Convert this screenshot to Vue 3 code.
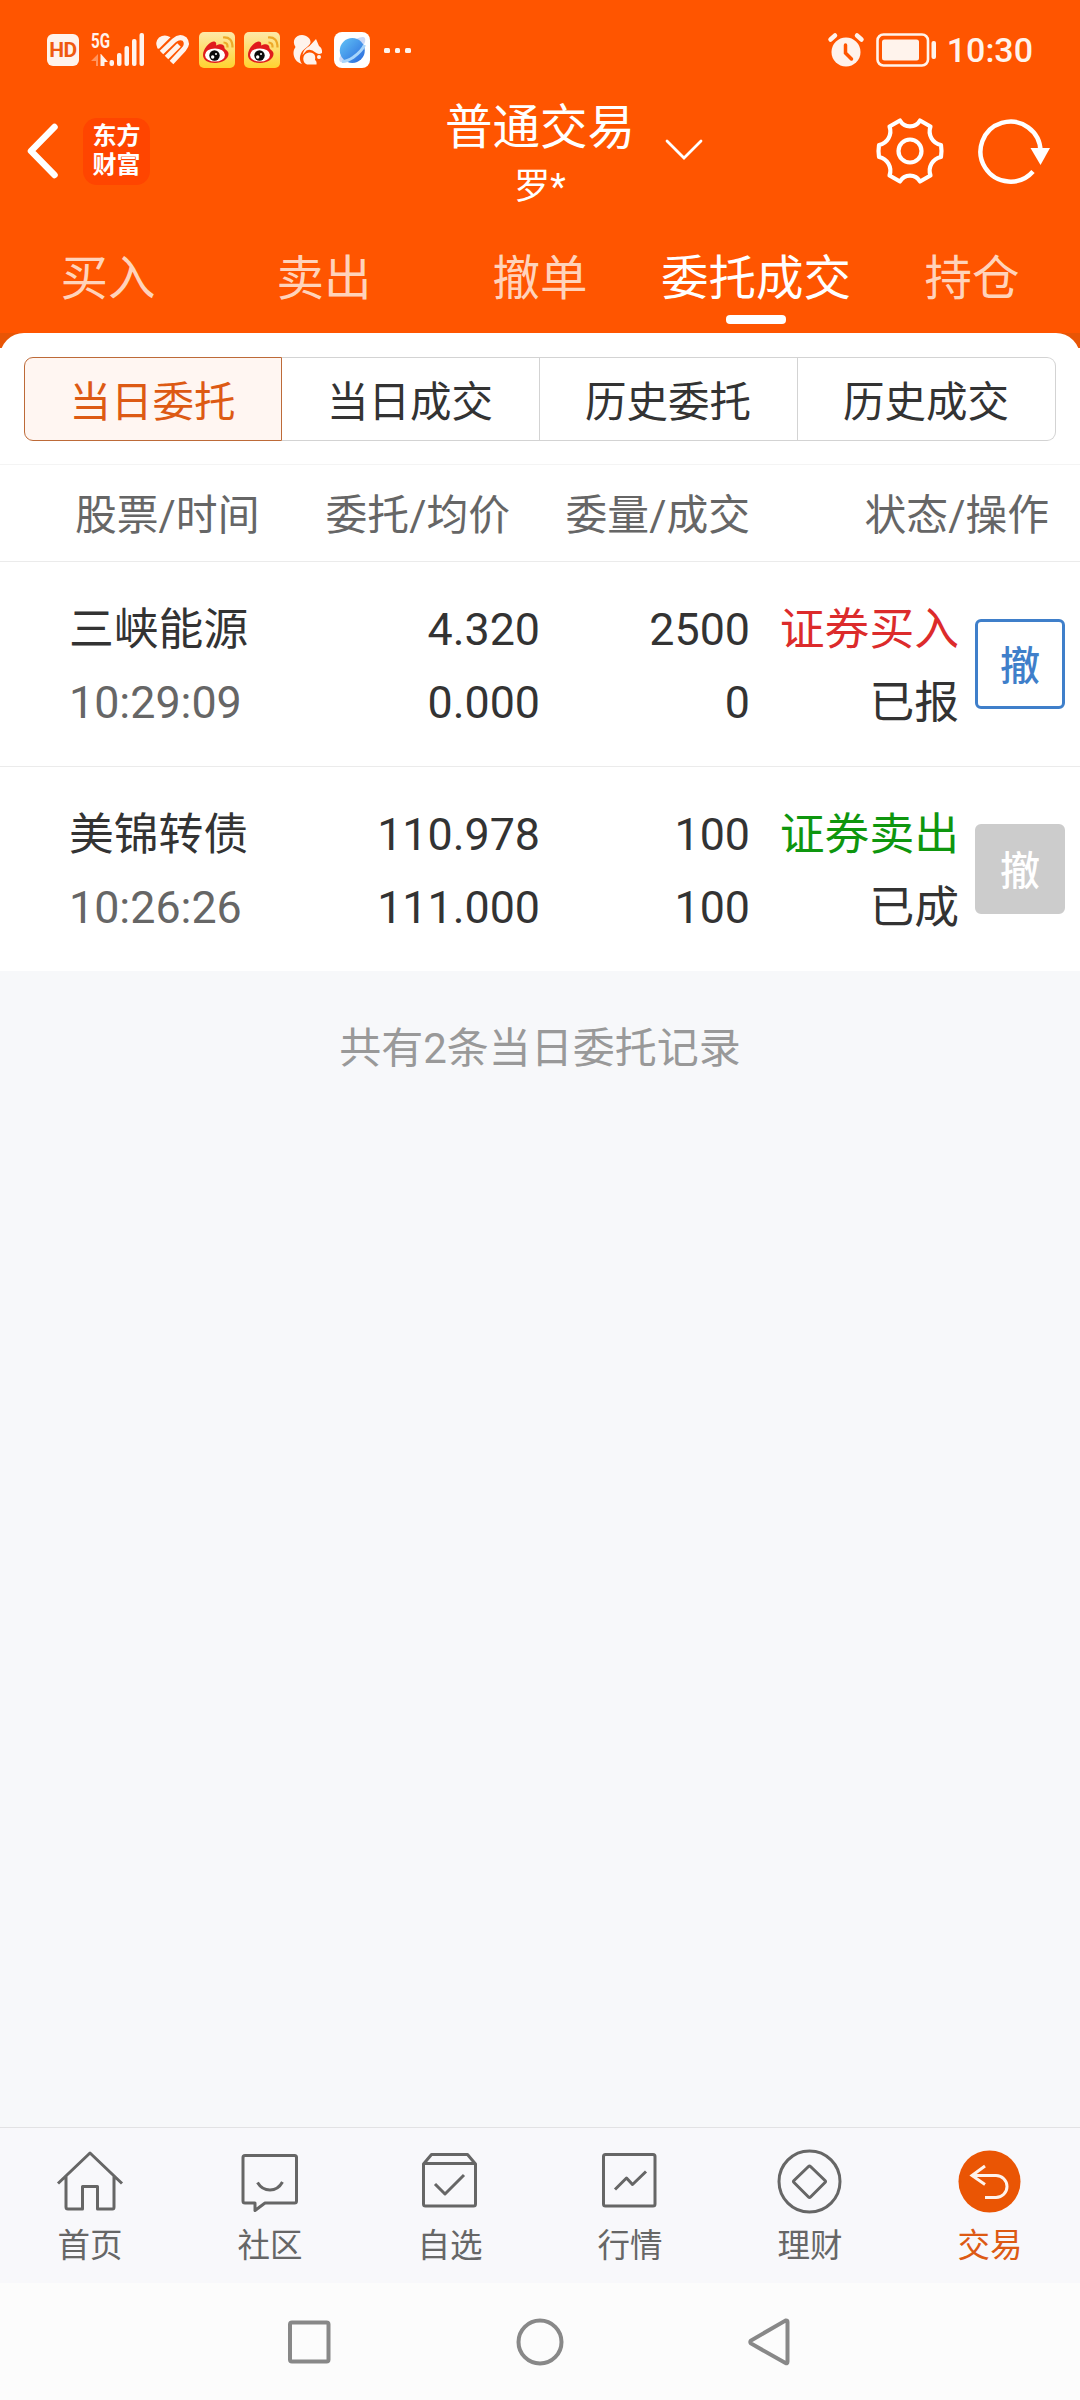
<template>
  <div class="page">
    <header class="top">
      <div class="status-bar">
        <div class="hd">HD</div>
        <svg class="signal" width="54" height="40" viewBox="0 -2 54 40">
          <text x="0" y="16" font-size="20" font-weight="700" textLength="19" lengthAdjust="spacingAndGlyphs">5G</text>
          <path d="M5 34V29H0L7 22V34Z" opacity="0.4" />
          <path d="M10 22L17 30H13.500V34H9.500V22Z" />
          <rect x="18.500" y="28" width="4.500" height="6" rx="2" />
          <rect x="26" y="21" width="4.500" height="13" rx="2" />
          <rect x="33.500" y="14" width="4.500" height="20" rx="2" />
          <rect x="41" y="7" width="4.500" height="27" rx="2" />
          <rect x="48.500" y="1" width="4.500" height="33" rx="2" />
        </svg>
        <svg class="health" width="34" height="32" viewBox="0 0 34 32">
          <path d="M1.500 14.500Q-1.500 8 3 3.500Q8.500 -.5 14.500 3.200L3 14.800Z" />
          <g fill="none" stroke="#fff3ec" stroke-width="5">
            <path d="M5.500 18.500L18 6.500Q23.500 1.500 28.500 5Q32.500 9.500 28 15L15.500 28.500" />
            <path d="M10.500 23.500L23 11" />
          </g>
        </svg>
        <svg v-for="n in 2" :key="n" class="weibo" width="36" height="36" viewBox="0 0 36 36">
          <defs>
            <linearGradient :id="'wb' + n" x1="0" y1="0" x2="0" y2="1">
              <stop offset="0" stop-color="#fde9a9" />
              <stop offset="1" stop-color="#ffd22f" />
            </linearGradient>
          </defs>
          <rect width="36" height="36" rx="5" :fill="'url(#wb' + n + ')'" />
          <path d="M4 23C4 17 10 10 14.500 9.500C17.500 9.500 17.500 12 17 13.500C21 11.500 25.500 11.500 25.500 16C25.500 17.500 29.500 18.500 29.500 22C29.500 27 23 31 16 31C9 31 4 28 4 23Z" fill="#e01b1d" />
          <ellipse cx="16" cy="23" rx="10" ry="6.600" fill="#fff" />
          <circle cx="15.500" cy="23.500" r="5.200" fill="#0c0c0c" />
          <circle cx="13.700" cy="25" r="1.700" fill="#fff" />
          <circle cx="17" cy="22" r="1" fill="#fff" />
          <path d="M24 5.500Q33.500 4.500 33.500 15.500M24.500 10.500Q29 10.500 28.500 15.500" fill="none" stroke="#eda928" stroke-width="2.200" />
        </svg>
        <svg class="squirrel" width="30" height="30" viewBox="0 0 30 30">
          <path d="M9 0C14 0 18 4 17.500 7.500C16.500 11.500 10 13.500 8 18.500C6 23 7 26.500 9 29C3.500 27.500 .5 23 .5 18C.5 15 1.500 13.500 2.500 12C-1.500 6 2.500 0 9 0Z" />
          <path d="M16.500 11L23 4L26 11Q29.500 13 29 18Q25.500 20 22.500 17.500Q18 13.500 13.500 15.500L9.500 20Q10.500 14 16.500 11Z" />
          <path d="M16 17.500C21.500 17 23 21 22 25Q24 26 23.500 29.500H14C9 28 8.500 18.500 16 17.500Z" />
          <circle cx="26" cy="22" r="2" />
        </svg>
        <svg class="planet" width="36" height="36" viewBox="0 0 36 36">
          <defs>
            <linearGradient id="planetFill" x1="0" y1="0" x2="1" y2="1">
              <stop offset="0" stop-color="#63c4f7" />
              <stop offset="1" stop-color="#2767dc" />
            </linearGradient>
          </defs>
          <rect width="36" height="36" rx="8" fill="#fff" />
          <path d="M22 7Q33 2 31 10Q29 17 19 25Q8 33 5.500 29Q4.500 26 8 21" fill="#cdd9f6" />
          <circle cx="18.300" cy="18.500" r="12.500" fill="url(#planetFill)" />
          <path d="M30.500 13Q28 19 19 25.500Q12 30 8 29.500" fill="none" stroke="#a8d5fb" stroke-width="3" />
        </svg>
        <div class="more"><i></i><i></i><i></i></div>
        <svg class="alarm" width="36" height="34" viewBox="0 0 36 34">
          <circle cx="18" cy="19" r="14.500" />
          <path d="M2.500 6.500L7 2.500M33.500 6.500L29 2.500" stroke="#fff3ec" stroke-width="4.500" stroke-linecap="round" />
          <path d="M17.500 12V20L23.500 26" fill="none" stroke="#ff5500" stroke-width="3.500" stroke-linecap="round" />
        </svg>
        <svg class="battery" width="61" height="34" viewBox="0 0 61 34">
          <rect x="1.500" y="1.500" width="50.500" height="31" rx="6" fill="none" stroke="#fff3ec" stroke-width="2.600" />
          <rect x="6" y="6.500" width="37" height="21" rx="2.500" />
          <rect x="55.500" y="8" width="4.500" height="18" rx="2" />
        </svg>
        <span class="clock">10:30</span>
      </div>

      <div class="title-bar">
        <div class="side">
          <svg class="back" width="34" height="58" viewBox="0 0 34 58">
            <path d="M29.500 5L6 29L29.500 53" fill="none" stroke="#fff" stroke-width="6.500" stroke-linecap="round" stroke-linejoin="round" />
          </svg>
          <div class="logo"><span>东方</span><span>财富</span></div>
        </div>
        <div class="account">
          <span class="account-type">普通交易</span>
          <span class="account-name">罗*</span>
          <svg class="caret" width="38" height="22" viewBox="0 0 38 22">
            <path d="M2 2L19 19L36 2" fill="none" stroke="#fff" stroke-width="2.800" stroke-linecap="round" />
          </svg>
        </div>
        <div class="side actions">
          <svg width="72" height="72" viewBox="-36 -36 72 72">
            <g fill="none" stroke="#fff" stroke-width="4.200" stroke-linejoin="round">
              <path d="M-10 -30.500A11.500 11.500 0 0 0 10 -30.500L20.500 -24.500A14 14 0 0 0 31 -6Q32 0 31 6A14 14 0 0 0 20.500 24.500L10 30.500A11.500 11.500 0 0 0 -10 30.500L-20.500 24.500A14 14 0 0 0 -31 6Q-32 0 -31 -6A14 14 0 0 0 -20.500 -24.500Z" />
              <circle r="11.500" />
            </g>
          </svg>
          <svg width="80" height="72" viewBox="-36 -36 80 72">
            <path d="M29.500 0A30 30 0 1 0 22 20.500" fill="none" stroke="#fff" stroke-width="4.500" />
            <path d="M19.500 -3H39L29.500 14Z" fill="#fff" />
          </svg>
        </div>
      </div>

      <nav class="tabs">
        <div v-for="t in tabs" :key="t" :class="['tab', { active: t === currentTab }]" @click="currentTab = t">{{ t }}</div>
      </nav>
    </header>

    <main class="content">
      <section class="panel-wrap">
        <div class="panel">
          <div class="segments">
            <button
              v-for="s in segments"
              :key="s"
              :class="['segment', { active: s === currentSegment }]"
              @click="currentSegment = s"
            >{{ s }}</button>
          </div>
        </div>
      </section>

      <div class="list-head">
        <span class="c-name">股票/时间</span>
        <span class="c-price">委托/均价</span>
        <span class="c-amount">委量/成交</span>
        <span class="c-state">状态/操作</span>
      </div>

      <div v-for="o in orders" :key="o.time" class="order">
        <div class="col name"><span>{{ o.name }}</span><span class="time">{{ o.time }}</span></div>
        <div class="col price"><span>{{ o.price }}</span><span>{{ o.avg }}</span></div>
        <div class="col amount"><span>{{ o.amount }}</span><span>{{ o.filled }}</span></div>
        <div class="col state"><span :class="o.side">{{ o.action }}</span><span>{{ o.state }}</span></div>
        <button class="cancel" :disabled="o.done">撤</button>
      </div>

      <p class="summary">共有{{ orders.length }}条当日委托记录</p>
    </main>

    <footer>
      <nav class="app-nav">
        <div v-for="n in navItems" :key="n.label" :class="['nav-item', { active: n.active }]">
          <svg width="72" height="72" viewBox="0 0 72 72">
            <circle v-if="n.active" cx="35.500" cy="36.500" r="31" fill="#ea5504" />
            <path :d="n.icon" />
          </svg>
          <span>{{ n.label }}</span>
        </div>
      </nav>
      <div class="system-nav">
        <svg width="52" height="52" viewBox="0 0 52 52"><rect x="7" y="6.500" width="38.500" height="39" rx="2" /></svg>
        <svg width="52" height="52" viewBox="0 0 52 52"><circle cx="26" cy="26" r="21.500" /></svg>
        <svg width="52" height="52" viewBox="0 0 52 52"><path d="M40.500 4.500Q42.500 4 42.500 6V45.500Q42.500 48 40.500 47L6 27.500Q4.500 26 6 24.500Z" /></svg>
      </div>
    </footer>
  </div>
</template>

<script setup>
import { ref } from 'vue'

const tabs = ['买入', '卖出', '撤单', '委托成交', '持仓']
const currentTab = ref('委托成交')

const segments = ['当日委托', '当日成交', '历史委托', '历史成交']
const currentSegment = ref('当日委托')

const orders = [
  { name: '三峡能源', time: '10:29:09', price: '4.320', avg: '0.000', amount: 2500, filled: 0, side: 'buy', action: '证券买入', state: '已报', done: false },
  { name: '美锦转债', time: '10:26:26', price: '110.978', avg: '111.000', amount: 100, filled: 100, side: 'sell', action: '证券卖出', state: '已成', done: true },
]

const navItems = [
  { label: '首页', icon: 'M4 38.5L36 8L68 38.5M12 31.500V62Q12 64 14 64H28.500V41.500H43.500V64H58.500Q60 64 60 62V31.500' },
  { label: '社区', icon: 'M11 10.500H60.500Q62.500 10.500 62.500 12.500V56Q62.500 58 60.500 58H31L21 65.500V58H11Q9 58 9 56V12.500Q9 10.500 11 10.500ZM23.500 37.500Q28 45 36 45Q44 45 48.500 37' },
  { label: '自选', icon: 'M9.500 19L17.500 9.500H53.500L61.500 19V59Q61.500 61 59.500 61H11.500Q9.500 61 9.500 59ZM9.500 18.500H61.500M21 39L31 49L50 30' },
  { label: '行情', icon: 'M11.500 9.500H59Q61 9.500 61 11.500V59Q61 61 59 61H11.500Q9.500 61 9.500 59V11.500Q9.500 9.500 11.500 9.500ZM21 44.500L32.500 33L38.500 39.500L52 26.500' },
  { label: '理财', icon: 'M5 36.500A30.500 30.500 0 1 1 66 36.500A30.500 30.500 0 1 1 5 36.500ZM34.500 21.500Q35.500 20.500 36.500 21.500L51 35.500Q52 36.500 51 37.500L36.500 52Q35.500 53 34.500 52L20 37.500Q19 36.500 20 35.500Z' },
  { label: '交易', icon: 'M31 21L18 30.500L31 39.500M18 30.500H42A11 11 0 0 1 42 52.500H31', active: true },
]
</script>

<style>
body {
  margin: 0;
  background: #f7f8fa;
}
</style>

<style scoped>
.page {
  width: 1080px;
  height: 2400px;
  display: flex;
  flex-direction: column;
  font-family: Roboto, "Noto Sans CJK SC", sans-serif;
  color: #333;
  background: #f7f8fa;
  overflow: hidden;
}

button {
  font-family: inherit;
  padding: 0;
  box-sizing: border-box;
}

svg { display: block; flex: none; overflow: visible; }

.top {
  height: 333px;
  background: #ff5500;
  color: #fff;
}

.status-bar {
  display: flex;
  align-items: center;
  height: 100px;
  padding: 0 47px;
  box-sizing: border-box;
  fill: #fff3ec;
}

.hd {
  width: 32px;
  height: 32px;
  border-radius: 6px;
  background: #fff3ec;
  color: #ef5a10;
  font-size: 21px;
  font-weight: 700;
  line-height: 33px;
  text-align: center;
  letter-spacing: -0.5px;
}

.signal { margin-left: 12px; }
.health { margin-left: 11px; }
.weibo { margin-left: 9px; }
.squirrel { margin-left: 13px; }
.planet { margin-left: 11px; }

.more {
  display: flex;
  gap: 5px;
  margin-left: 14px;
}

.more i {
  width: 5.5px;
  height: 5px;
  border-radius: 1.5px;
  background: #fff3ec;
}

.alarm { margin-left: auto; }
.battery { margin-left: 12px; }

.clock {
  margin-left: 10px;
  font-size: 34px;
  font-weight: 500;
  line-height: 40px;
  color: #fff3ec;
}

.title-bar {
  display: flex;
  justify-content: space-between;
  height: 128px;
}

.side {
  display: flex;
  align-items: center;
  width: 220px;
  height: 102px;
  padding-left: 25px;
  box-sizing: border-box;
}

.actions {
  padding: 0 25px 0 0;
  justify-content: flex-end;
  gap: 29px;
}

.logo {
  display: flex;
  flex-direction: column;
  align-items: center;
  justify-content: center;
  width: 67px;
  height: 67px;
  margin-left: 24px;
  border-radius: 14px;
  background: #ff4500;
  font-size: 24px;
  font-weight: 700;
  line-height: 29px;
}

.account {
  position: relative;
  display: flex;
  flex-direction: column;
  align-items: center;
  padding-top: 2px;
}

.account-type {
  font-size: 47.5px;
  line-height: 52px;
}

.account-name {
  font-size: 36px;
  line-height: 66px;
}

.caret {
  position: absolute;
  left: 220px;
  top: 39px;
}

.tabs {
  display: flex;
  height: 105px;
}

.tab {
  position: relative;
  width: 216px;
  line-height: 102px;
  font-size: 47.5px;
  text-align: center;
  color: #ffd3bb;
}

.tab.active { color: #fff; }

.tab.active::after {
  content: '';
  position: absolute;
  left: 78px;
  top: 87px;
  width: 60px;
  height: 9px;
  border-radius: 4px;
  background: #fff;
}

.content { flex: 1; }

.panel-wrap {
  background: linear-gradient(#e85505 15px, #fff 15px);
}

.panel {
  padding: 24px 24px 23px;
  border-radius: 24px 24px 0 0;
  background: #fff;
}

.segments { display: flex; }

.segment {
  width: 258px;
  height: 84px;
  padding: 0 1px 1px 0;
  border: 1px solid #d3d3d3;
  border-left-width: 0;
  background: #fff;
  color: #333;
  font-size: 41.5px;
}

.segment:first-child { border-left-width: 1px; border-radius: 9px 0 0 9px; }
.segment:last-child { border-radius: 0 9px 9px 0; }

.segment.active {
  border-color: #bd6a38;
  background: #fff6f2;
  color: #dd5a14;
}

.list-head {
  display: flex;
  height: 98px;
  padding: 0 31px 0 75px;
  box-sizing: border-box;
  border-top: 1px solid #f4f4f4;
  border-bottom: 1px solid #ebebeb;
  background: #fff;
  font-size: 41.8px;
  line-height: 101px;
  color: #666;
  text-align: right;
}

.c-name { width: 186px; text-align: left; }
.c-price { width: 249px; }
.c-amount { width: 240px; }
.c-state { flex: 1; }

.order {
  display: flex;
  height: 205px;
  padding: 31px 15px 0 69px;
  box-sizing: border-box;
  border-bottom: 1px solid #ebebeb;
  background: #fff;
  font-size: 44.8px;
}

.order:nth-last-child(2) { height: 204px; border-bottom: none; }

.col {
  display: flex;
  flex-direction: column;
  line-height: 73px;
  text-align: right;
}

.name { width: 200px; text-align: left; }
.price { width: 271px; }
.amount { width: 210px; }
.state { width: 209px; }
.time { color: #666; }
.buy { color: #dc2b2b; }
.sell { color: #0e960e; }

.cancel {
  width: 90px;
  height: 90px;
  margin: 26px 0 0 auto;
  padding-bottom: 2px;
  border: 3px solid #3f7fca;
  border-radius: 6px;
  background: #fff;
  color: #3f7fca;
  font-size: 40px;
  font-weight: 500;
}

.cancel:disabled {
  border-color: #ccc;
  background: #ccc;
  color: #fff;
}

.summary {
  margin: 48px 0 0;
  font-size: 42px;
  line-height: 60px;
  text-align: center;
  color: #999;
}

.app-nav {
  display: flex;
  height: 156px;
  border-top: 1px solid #e2e2e4;
  background: #f8f8fb;
  box-sizing: border-box;
}

.nav-item {
  width: 180px;
  padding-top: 17px;
  display: flex;
  flex-direction: column;
  align-items: center;
  font-size: 32.5px;
  line-height: 58px;
  color: #666;
}

.nav-item path {
  fill: none;
  stroke: #666;
  stroke-width: 3;
  stroke-linejoin: round;
}

.nav-item.active { color: #dd5a14; }

.nav-item.active path {
  stroke: #fff3ec;
  stroke-linejoin: miter;
}

.system-nav {
  display: flex;
  align-items: center;
  justify-content: center;
  gap: 179px;
  height: 117px;
  background: #fcfcfc;
}

.system-nav svg {
  fill: none;
  stroke: #888;
  stroke-width: 4;
}
</style>
